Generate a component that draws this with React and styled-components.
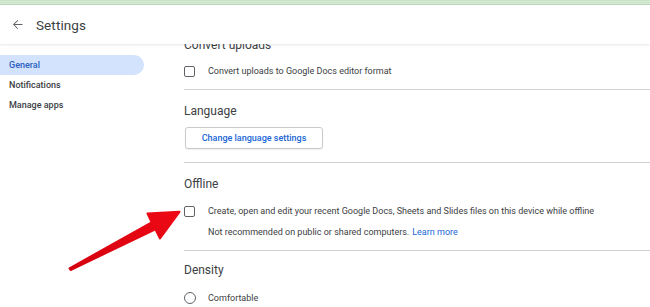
import React from "react";
import styled, { createGlobalStyle } from "styled-components";

const Global = createGlobalStyle`
  html, body { margin: 0; padding: 0; background: #fff; }
  body { font-family: Roboto, "Liberation Sans", Arial, sans-serif; color: #3c4043; }
  * { box-sizing: border-box; }
`;

const Page = styled.div`
  position: relative;
  width: 650px;
  height: 307px;
  overflow: hidden;
  background: #fff;
  display: flex;
  flex-direction: column;
`;

const TopStrip = styled.div`
  height: 5px;
  flex: none;
  background: repeating-linear-gradient(#c9e3c9 0 1px, #d6ecd4 1px 2px);
  border-bottom: 1px solid #bcd8bc;
`;

const Header = styled.header`
  position: relative;
  z-index: 2;
  height: 39px;
  flex: none;
  display: flex;
  align-items: center;
  padding-left: 8px;
  gap: 10px;
  background: #fff;
  box-shadow: 0 1px 2px rgba(60, 64, 67, 0.12);
`;

const BackButton = styled.div`
  width: 18px;
  height: 18px;
  display: flex;
  align-items: center;
  justify-content: center;
  color: #5f6368;
`;

const Title = styled.h1`
  margin: 0;
  font-size: 13.5px;
  font-weight: 400;
  color: #3c4043;
  letter-spacing: 0.1px;
`;

const Body = styled.div`
  flex: 1;
  display: grid;
  grid-template-columns: 184px 1fr;
  min-height: 0;
`;

const Sidebar = styled.nav`
  display: flex;
  flex-direction: column;
  padding-top: 11px;
`;

const NavItem = styled.div`
  height: 20px;
  width: 144px;
  display: flex;
  align-items: center;
  padding-left: 9px;
  font-size: 9px;
  font-weight: 500;
  border-radius: 0 10px 10px 0;
  color: ${(p) => (p.$active ? "#2a5fbf" : "#3c4043")};
  background: ${(p) => (p.$active ? "#d3e3fd" : "transparent")};
`;

const Content = styled.main`
  overflow: hidden;
  min-height: 0;
`;

const Scroll = styled.div`
  margin-top: -9px;
`;

const Section = styled.section`
  padding: ${(p) => p.$pad || "10px 0 10px"};
  border-bottom: ${(p) => (p.$last ? "none" : "1px solid #d0d1d3")};
`;

const Heading = styled.h2`
  margin: 0;
  height: 20px;
  line-height: 20px;
  font-size: 12px;
  font-weight: 400;
  color: #3c4043;
`;

const Row = styled.div`
  display: flex;
  align-items: center;
  height: 20px;
  margin-top: ${(p) => p.$mt || "0"};
  font-size: 9px;
  color: #3c4043;
`;

const Control = styled.span`
  width: 24px;
  flex: none;
  display: flex;
  align-items: center;
`;

const Checkbox = styled.span`
  width: 11px;
  height: 11px;
  border: 1.5px solid #5f6368;
  border-radius: 2px;
`;

const Radio = styled.span`
  width: 12px;
  height: 12px;
  border: 1.5px solid #5f6368;
  border-radius: 50%;
`;

const Indent = styled.div`
  padding-left: 24px;
  height: 20px;
  display: flex;
  align-items: center;
  font-size: 9px;
  color: #3c4043;
  margin-top: 1px;
`;

const Link = styled.a`
  color: #1a66d6;
  margin-left: 3px;
  text-decoration: none;
`;

const OutlineButton = styled.button`
  margin-top: 6px;
  margin-left: 1px;
  width: 138px;
  height: 22px;
  border: 1px solid #c8cacd;
  border-radius: 3px;
  background: #fff;
  font-family: inherit;
  font-size: 9px;
  font-weight: 500;
  color: #1a66d6;
  padding: 0;
  box-shadow: 0 1px 1px rgba(60, 64, 67, 0.08);
`;

const Overlay = styled.svg`
  position: absolute;
  left: 0;
  top: 0;
  pointer-events: none;
  z-index: 3;
`;

export default function App() {
  return (
    <>
      <Global />
      <Page>
        <TopStrip />
        <Header>
          <BackButton>
            <svg width="15" height="15" viewBox="0 0 24 24">
              <path
                fill="currentColor"
                d="M20 11.2H7.6l5.4-5.4L12 4.8 4.8 12l7.2 7.2 1-1-5.4-5.4H20z"
              />
            </svg>
          </BackButton>
          <Title>Settings</Title>
        </Header>
        <Body>
          <Sidebar>
            <NavItem $active>General</NavItem>
            <NavItem>Notifications</NavItem>
            <NavItem>Manage apps</NavItem>
          </Sidebar>
          <Content>
            <Scroll>
              <Section $pad="0 0 8px">
                <Heading>Convert uploads</Heading>
                <Row $mt="6px">
                  <Control>
                    <Checkbox />
                  </Control>
                  Convert uploads to Google Docs editor format
                </Row>
              </Section>
              <Section $pad="11px 0 13px">
                <Heading>Language</Heading>
                <OutlineButton>Change language settings</OutlineButton>
              </Section>
              <Section $pad="11px 0 8px">
                <Heading>Offline</Heading>
                <Row $mt="7px">
                  <Control>
                    <Checkbox />
                  </Control>
                  Create, open and edit your recent Google Docs, Sheets and
                  Slides files on this device while offline
                </Row>
                <Indent>
                  Not recommended on public or shared computers.
                  <Link>Learn more</Link>
                </Indent>
              </Section>
              <Section $pad="9px 0 0" $last>
                <Heading>Density</Heading>
                <Row $mt="8px">
                  <Control>
                    <Radio />
                  </Control>
                  Comfortable
                </Row>
              </Section>
            </Scroll>
          </Content>
        </Body>
        <Overlay width="650" height="307" viewBox="0 0 650 307">
          <defs>
            <linearGradient id="arrowFill" x1="0" y1="1" x2="1" y2="0">
              <stop offset="0" stopColor="#d4000f" />
              <stop offset="1" stopColor="#ee0a14" />
            </linearGradient>
          </defs>
          <path
            d="M69.5 268.3 L151.6 222.4 L147.5 213.5 L179.5 211.8 L160 238.5 L155.4 229.4 L70.6 270 Z"
            fill="url(#arrowFill)"
            stroke="url(#arrowFill)"
            strokeWidth="2"
            strokeLinejoin="round"
          />
        </Overlay>
      </Page>
    </>
  );
}
